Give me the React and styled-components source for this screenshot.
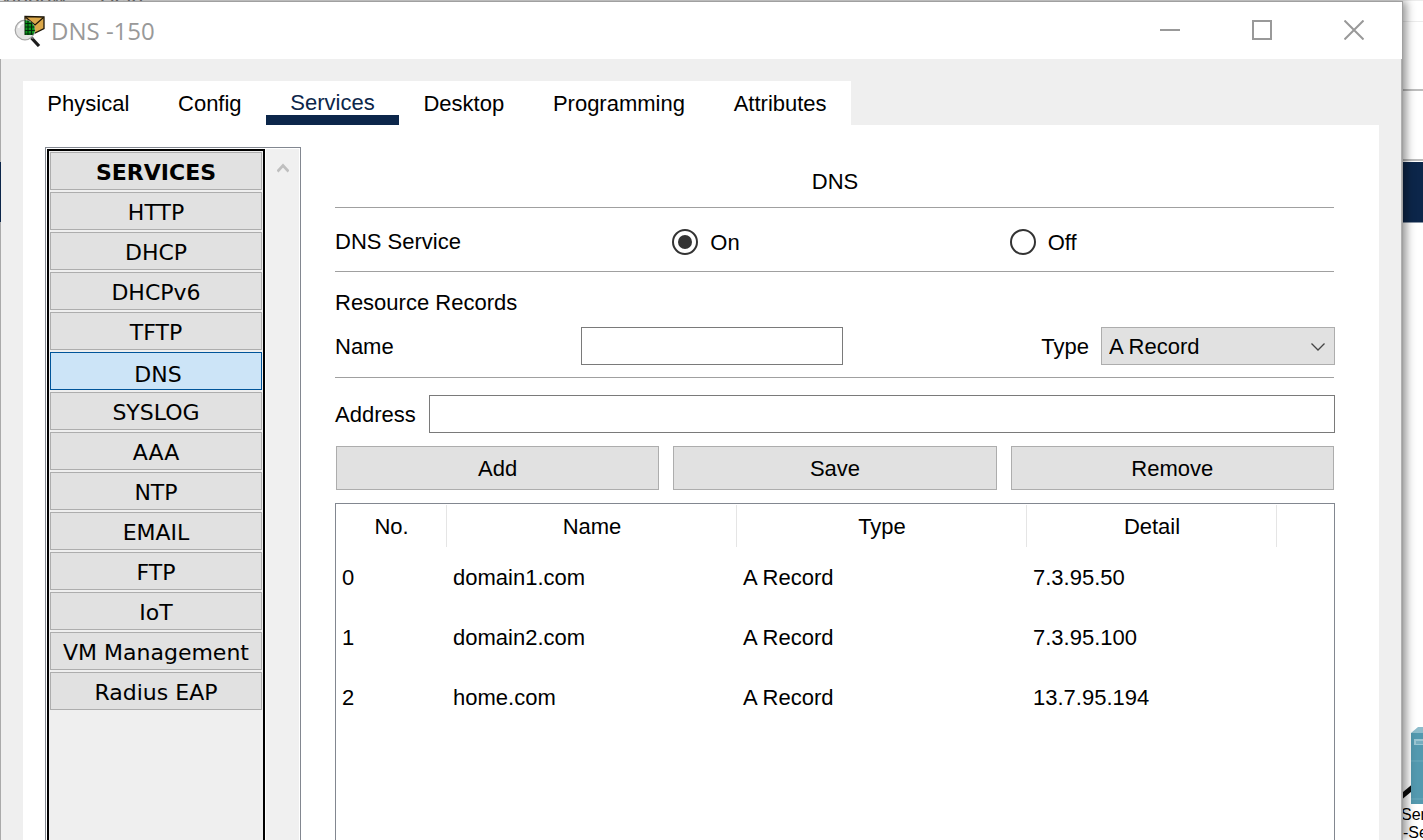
import React, { useState } from 'react';
import styled, { createGlobalStyle, css } from 'styled-components';

const NAVY = '#0c264a';
const PANEL = '#efefef';

const GlobalStyle = createGlobalStyle`
  *, *::before, *::after { box-sizing: border-box; }
  body {
    margin: 0;
    background: #fff;
    color: #000;
    font-family: 'Liberation Sans', Arial, sans-serif;
    font-size: 22px;
    line-height: 26px;
  }
  button, input, select { font: inherit; color: inherit; margin: 0; border-radius: 0; }
`;

const Desktop = styled.div`
  height: 100vh;
  display: flex;
  flex-direction: column;
  overflow: hidden;
`;

const MenuStrip = styled.div`
  height: 1px;
  flex: none;
  display: flex;
  align-items: flex-end;
  gap: 33px;
  margin-left: -8px;
  overflow: hidden;
  background: #ededed;
  color: #777;
  font-size: 21px;
  line-height: 8px;
`;

const Stage = styled.div`
  flex: 1;
  min-height: 0;
  display: flex;
`;

const Window = styled.div`
  position: relative;
  z-index: 1;
  flex: 1;
  min-width: 0;
  display: flex;
  flex-direction: column;
  border-top: 1px solid #a0a0a0;
  border-right: 1px solid #a0a0a0;
  box-shadow: 3px 0 9px rgba(0, 0, 0, 0.45);
  background: ${PANEL};
`;

const TitleBar = styled.header`
  flex: none;
  height: 57px;
  display: flex;
  align-items: center;
  padding: 0 2px 0 14px;
  background: #fff;
`;

const Title = styled.h1`
  flex: 1;
  margin: 0 0 0 5px;
  color: #999;
  font-family: 'Open Sans', 'Noto Sans', sans-serif;
  font-size: 24px;
  font-weight: 400;
  line-height: 32px;
`;

const WindowButton = styled.button`
  width: 92px;
  height: 57px;
  display: grid;
  place-items: center;
  padding: 0 0 2px;
  border: 0;
  background: none;
  color: #999;
`;

const Frame = styled.div`
  flex: 1;
  min-height: 0;
  display: flex;
  border-right: 1px solid #b0b0b0;
`;

const FrameEdge = styled.div`
  width: 1px;
  background: linear-gradient(#aaa 103px, ${NAVY} 103px, ${NAVY} 163px, #aaa 163px);
`;

const Body = styled.div`
  flex: 1;
  min-width: 0;
  display: flex;
  flex-direction: column;
  padding: 22px 22px 0;
`;

const Tabs = styled.nav`
  flex: none;
  width: 828px;
  height: 44px;
  display: flex;
  background: #fff;
`;

const Tab = styled.button`
  flex: 1 1 auto;
  padding: 2px 0 0;
  border: 0;
  border-bottom: 0 solid ${NAVY};
  background: none;
  ${({ $active }) =>
    $active &&
    css`
      padding-top: 10px;
      border-bottom-width: 10px;
      line-height: 24px;
      color: ${NAVY};
    `}
`;

const Panel = styled.div`
  flex: 1;
  min-height: 0;
  display: flex;
  gap: 34px;
  padding: 22px 44px 0 22px;
  background: #fff;
`;

const Sidebar = styled.aside`
  flex: none;
  width: 256px;
  display: flex;
  gap: 1px;
  padding: 1px 1px 0;
  border: 1px solid #828790;
  border-bottom: 0;
`;

const ServiceList = styled.div`
  width: 218px;
  display: flex;
  flex-direction: column;
  gap: 2px;
  padding: 1px;
  border: 2px solid #000;
  border-bottom: 0;
  background: ${PANEL};
`;

const ServiceButton = styled.button`
  flex: none;
  height: 38px;
  padding: 4px 0 0;
  border: 1px solid #adadad;
  background: #e1e1e1;
  font-family: 'DejaVu Sans', Verdana, sans-serif;
  font-weight: ${({ $heading }) => ($heading ? 700 : 400)};
  white-space: nowrap;
  ${({ $selected }) =>
    $selected &&
    css`
      padding: 8px 0 0 4px;
      border-color: #005499;
      background: #cce4f7;
    `}
`;

const ScrollTrack = styled.div`
  flex: 1;
  padding-top: 14px;
  background: #f0f0f0;
  text-align: center;
  line-height: 0;
`;

const Main = styled.main`
  flex: 1;
  min-width: 0;
  display: flex;
  flex-direction: column;
`;

const Heading = styled.h2`
  flex: none;
  height: 60px;
  margin: 0;
  padding-top: 22px;
  font-size: 22px;
  font-weight: 400;
  text-align: center;
`;

const Rule = styled.hr`
  flex: none;
  width: auto;
  height: 1px;
  margin: 0 1px 0 0;
  border: 0;
  background: #a0a0a0;
`;

const ServiceRow = styled.div`
  flex: none;
  height: 63px;
  display: grid;
  grid-template-columns: repeat(3, 1fr);
  gap: 12px;
  align-items: center;
  padding-top: 4px;
`;

const RadioLabel = styled.label`
  display: flex;
  align-items: center;
  gap: 12px;
`;

const RadioText = styled.span`
  padding-top: 2px;
`;

const Radio = styled.input`
  appearance: none;
  width: 26px;
  height: 26px;
  display: grid;
  place-items: center;
  border: 2px solid #333;
  border-radius: 50%;
  background: #fff;
  &:checked::before {
    content: '';
    width: 14px;
    height: 14px;
    border-radius: 50%;
    background: #333;
  }
`;

const Subheading = styled.h3`
  flex: none;
  height: 55px;
  margin: 0;
  padding-top: 18px;
  font-size: 22px;
  font-weight: 400;
`;

const FieldRow = styled.div`
  flex: none;
  display: flex;
  align-items: center;
  gap: 13px;
  margin: ${({ $before = 0 }) => $before}px 0 ${({ $after }) => $after}px;
`;

const FieldLabel = styled.label`
  padding-top: 2px;
  ${({ $width }) => $width && css`width: ${$width}px;`}
`;

const TextInput = styled.input`
  height: 38px;
  padding: 0 8px;
  border: 1px solid #7a7a7a;
  background: #fff;
  ${({ $wide }) =>
    $wide
      ? css`
          flex: 1;
          min-width: 0;
        `
      : css`
          width: 262px;
        `}
`;

const TypeField = styled.div`
  display: flex;
  align-items: center;
  gap: 12px;
  margin-left: auto;
`;

const SelectBox = styled.div`
  position: relative;
  svg {
    position: absolute;
    top: 15px;
    right: 10px;
    pointer-events: none;
  }
`;

const Select = styled.select`
  appearance: none;
  display: block;
  width: 234px;
  height: 38px;
  padding: 2px 32px 0 7px;
  border: 1px solid #adadad;
  background: #e1e1e1;
`;

const Actions = styled.div`
  flex: none;
  display: grid;
  grid-template-columns: repeat(3, 1fr);
  gap: 14px;
  margin: 0 1px 13px;
`;

const ActionButton = styled.button`
  height: 44px;
  padding: 2px 0 0;
  border: 1px solid #adadad;
  background: #e1e1e1;
`;

const Records = styled.div`
  flex: 1;
  min-height: 0;
  border: 1px solid #828790;
  border-bottom: 0;
  padding-top: 1px;
  overflow: hidden;
`;

const Table = styled.table`
  width: 100%;
  table-layout: fixed;
  border-collapse: separate;
  border-spacing: 0;
  th, td { font-weight: 400; }
  th { height: 42px; padding: 2px 0 0 1px; border-right: 1px solid #e5e5e5; }
  th:last-child { border-right: 0; }
  td { height: 60px; padding: 2px 0 0 6px; text-align: left; }
`;

const Column = styled.col`
  width: ${({ $width }) => $width};
`;

const Backdrop = styled.div`
  flex: none;
  width: 20px;
  display: flex;
  flex-direction: column;
  overflow: hidden;
  background: #fff;
`;

const ToolStrip = styled.div`
  flex: none;
  height: ${({ $height }) => $height}px;
  border-bottom: ${({ $line }) => $line};
`;

const NavyBand = styled.div`
  flex: none;
  height: 61px;
  margin-top: 1px;
  border-bottom: 1px solid #8793a4;
  background: ${NAVY};
`;

const Device = styled.div`
  margin: auto 0 -2px;
  font-size: 16px;
  line-height: 18px;
  white-space: nowrap;
  svg { display: block; }
`;

const DeviceName = styled.div`
  margin-left: ${({ $shift }) => $shift}px;
`;

const services = [
  'HTTP', 'DHCP', 'DHCPv6', 'TFTP', 'DNS', 'SYSLOG', 'AAA',
  'NTP', 'EMAIL', 'FTP', 'IoT', 'VM Management', 'Radius EAP',
];

const tabs = ['Physical', 'Config', 'Services', 'Desktop', 'Programming', 'Attributes'];

const records = [
  ['0', 'domain1.com', 'A Record', '7.3.95.50'],
  ['1', 'domain2.com', 'A Record', '7.3.95.100'],
  ['2', 'home.com', 'A Record', '13.7.95.194'],
];

const AppIcon = () => (
  <svg width="32" height="32" viewBox="0 0 32 32" aria-hidden="true">
    <path d="M11 1.5L30 2v11.500L21 18l-10-4z" fill="#dca94b" stroke="#1d1608" strokeWidth="1.3" />
    <path d="M12 2.5l9 7.500 8.500-7.500" fill="none" stroke="#1d1608" strokeWidth="1.2" />
    <circle cx="11" cy="15" r="9.8" fill="#e4e4e4" stroke="#a4a4a4" strokeWidth="1.2" />
    <path d="M11 5.200a9.800 9.800 0 0 1 9.800 9.800c0 2-1 4-2.200 5H11z" fill="#0b9a1c" />
    <path d="M11 8.500h7.500M11 12h9.500M11 15.500h9.800M11 19h8.500M14 5.500V20M17.500 7.300V20" stroke="#02270a" strokeWidth="1.1" fill="none" />
    <path d="M11 5v15" stroke="#062d0b" />
    <path d="M4.500 13q1-4.500 5-5.500" stroke="#fff" strokeWidth="2" fill="none" />
    <path d="M17.500 23l7.500 8" stroke="#1c1c1c" strokeWidth="3.2" />
    <path d="M17.500 22.500l2 1" stroke="#777" strokeWidth="1.5" />
  </svg>
);

const DnsService = () => {
  const [enabled, setEnabled] = useState(true);
  return (
    <ServiceRow role="radiogroup" aria-labelledby="dns-service">
      <span id="dns-service">DNS Service</span>
      <RadioLabel>
        <Radio type="radio" name="service" checked={enabled} onChange={() => setEnabled(true)} />
        <RadioText>On</RadioText>
      </RadioLabel>
      <RadioLabel>
        <Radio type="radio" name="service" checked={!enabled} onChange={() => setEnabled(false)} />
        <RadioText>Off</RadioText>
      </RadioLabel>
    </ServiceRow>
  );
};

export default function App() {
  return (
    <Desktop>
      <GlobalStyle />
      <MenuStrip>
        <span>Window</span>
        <span>Help</span>
      </MenuStrip>
      <Stage>
        <Window>
          <TitleBar>
            <AppIcon />
            <Title>DNS -150</Title>
            <WindowButton aria-label="Minimize">
              <svg width="20" height="20"><path d="M0 10h20" stroke="currentColor" strokeWidth="2" /></svg>
            </WindowButton>
            <WindowButton aria-label="Maximize">
              <svg width="20" height="20"><rect x="1" y="1" width="18" height="18" fill="none" stroke="currentColor" strokeWidth="2" /></svg>
            </WindowButton>
            <WindowButton aria-label="Close">
              <svg width="20" height="20"><path d="M.5.5l19 19M19.500.5l-19 19" stroke="currentColor" strokeWidth="2" /></svg>
            </WindowButton>
          </TitleBar>
          <Frame>
            <FrameEdge />
            <Body>
              <Tabs>
                {tabs.map((name) => (
                  <Tab key={name} $active={name === 'Services'}>{name}</Tab>
                ))}
              </Tabs>
              <Panel>
                <Sidebar>
                  <ServiceList>
                    <ServiceButton $heading>SERVICES</ServiceButton>
                    {services.map((name) => (
                      <ServiceButton key={name} $selected={name === 'DNS'}>{name}</ServiceButton>
                    ))}
                  </ServiceList>
                  <ScrollTrack>
                    <svg width="12" height="10"><path d="M.5 8.500L6 2.500l5.500 6" fill="none" stroke="#bfbfbf" strokeWidth="2.600" /></svg>
                  </ScrollTrack>
                </Sidebar>
                <Main>
                  <Heading>DNS</Heading>
                  <Rule />
                  <DnsService />
                  <Rule />
                  <Subheading>Resource Records</Subheading>
                  <FieldRow $after={12}>
                    <FieldLabel htmlFor="record-name" $width={233}>Name</FieldLabel>
                    <TextInput id="record-name" type="text" />
                    <TypeField>
                      <FieldLabel htmlFor="record-type">Type</FieldLabel>
                      <SelectBox>
                        <Select id="record-type" defaultValue="A Record">
                          <option>A Record</option>
                          <option>CNAME</option>
                          <option>SOA</option>
                          <option>NS Record</option>
                        </Select>
                        <svg width="14" height="10"><path d="M.5 1.500L7 8l6.500-6.500" fill="none" stroke="#444" strokeWidth="1.300" /></svg>
                      </SelectBox>
                    </TypeField>
                  </FieldRow>
                  <Rule />
                  <FieldRow $before={17} $after={13}>
                    <FieldLabel htmlFor="address">Address</FieldLabel>
                    <TextInput id="address" type="text" $wide />
                  </FieldRow>
                  <Actions>
                    <ActionButton>Add</ActionButton>
                    <ActionButton>Save</ActionButton>
                    <ActionButton>Remove</ActionButton>
                  </Actions>
                  <Records>
                    <Table>
                      <colgroup>
                        <Column $width="111px" />
                        <Column $width="290px" />
                        <Column $width="290px" />
                        <Column $width="250px" />
                        <Column $width="auto" />
                      </colgroup>
                      <thead>
                        <tr>
                          <th>No.</th>
                          <th>Name</th>
                          <th>Type</th>
                          <th>Detail</th>
                          <th aria-hidden="true" />
                        </tr>
                      </thead>
                      <tbody>
                        {records.map((row) => (
                          <tr key={row[0]}>
                            {row.map((cell, i) => <td key={i}>{cell}</td>)}
                            <td />
                          </tr>
                        ))}
                      </tbody>
                    </Table>
                  </Records>
                </Main>
              </Panel>
            </Body>
          </Frame>
        </Window>
        <Backdrop>
          <ToolStrip $height={21} $line="1px solid #ececec" />
          <ToolStrip $height={69} $line="2px solid #bdbdbd" />
          <ToolStrip $height={70} $line="2px solid #bdbdbd" />
          <NavyBand />
          <Device>
            <svg width="20" height="79" viewBox="0 0 20 79" aria-hidden="true">
              <path d="M-2 70L10 60" stroke="#0a0a0a" strokeWidth="5" />
              <path d="M8 6l7-6h5v6z" fill="#8dbccb" />
              <path d="M8 6h12v71H8z" fill="#5399af" />
              <path d="M11 12h9v6h-9z" fill="#9bc6d3" />
              <path d="M13 14h7v3h-7z" fill="#74adbf" />
              <path d="M8 34h12M8 72h12" stroke="#6aa8bb" />
            </svg>
            <DeviceName $shift={-2}>Ser</DeviceName>
            <DeviceName $shift={-9}>p-Se</DeviceName>
          </Device>
        </Backdrop>
      </Stage>
    </Desktop>
  );
}
